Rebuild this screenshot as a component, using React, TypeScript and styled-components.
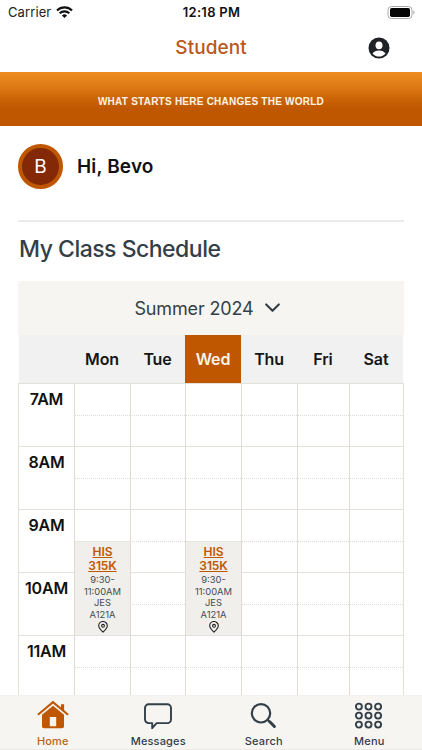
import React from "react";
import styled, { createGlobalStyle, css } from "styled-components";

const GlobalStyle = createGlobalStyle`
  *, *::before, *::after { box-sizing: border-box; }
  html, body { margin: 0; padding: 0; background: #fff; overflow: hidden; }
  body { font-family: Inter, "Liberation Sans", sans-serif; color: #111; }
`;

const Screen = styled.div`
  width: 422px;
  height: 750px;
  display: flex;
  flex-direction: column;
  overflow: hidden;
  background: #fff;
`;

const StatusBar = styled.div`
  flex: none;
  height: 24px;
  padding: 0 7px 0 8px;
  display: grid;
  grid-template-columns: 1fr auto 1fr;
  align-items: center;
`;

const Carrier = styled.div`
  display: flex;
  align-items: center;
  gap: 5px;
  font-size: 13px;
  line-height: 24px;
  letter-spacing: 0.1px;
  color: #222;
`;

const Clock = styled.div`
  font-size: 13px;
  line-height: 24px;
  font-weight: 600;
  letter-spacing: 0.3px;
  color: #111;
`;

const BatterySlot = styled.div`
  display: flex;
  justify-content: flex-end;
`;

const TitleBar = styled.header`
  flex: none;
  height: 48px;
  padding: 0 32px;
  display: grid;
  grid-template-columns: 1fr auto 1fr;
  align-items: center;
`;

const Title = styled.h1`
  grid-column: 2;
  margin: 0;
  font-size: 19px;
  line-height: 24px;
  font-weight: 500;
  letter-spacing: 0.05px;
  color: #b9581b;
`;

const AccountButton = styled.button`
  justify-self: end;
  display: flex;
  padding: 0;
  border: 0;
  background: none;
`;

const Banner = styled.div`
  flex: none;
  height: 54px;
  display: flex;
  align-items: center;
  justify-content: center;
  padding-top: 4px;
  background: linear-gradient(#ee8d20 0%, #e07c15 25%, #c96405 50%, #bf5700 68%, #bf5700 100%);
  color: #fff3e4;
  font-family: "Liberation Sans", sans-serif;
  font-size: 10px;
  font-weight: 700;
  letter-spacing: 0.24px;
`;

const Content = styled.main`
  flex: 1;
  min-height: 0;
  overflow: hidden;
  padding: 0 18px;
`;

const Greeting = styled.section`
  height: 94px;
  display: flex;
  gap: 14px;
  padding-top: 18px;
`;

const Avatar = styled.div`
  width: 45px;
  height: 45px;
  border: 4px solid #bf5700;
  border-radius: 50%;
  background: #842908;
  color: #fff;
  font-size: 19px;
  line-height: 38px;
  text-align: center;
`;

const Hello = styled.div`
  font-size: 19px;
  line-height: 45px;
  font-weight: 600;
  letter-spacing: 0.15px;
`;

const SectionTitle = styled.h2`
  height: 61px;
  margin: 0;
  padding-left: 1px;
  border-top: 2px solid #ecebe9;
  font-size: 23px;
  line-height: 54px;
  font-weight: 500;
  letter-spacing: -0.5px;
  color: #333f48;
`;

const TermPicker = styled.div`
  height: 54px;
  display: flex;
  align-items: center;
  justify-content: center;
  gap: 11px;
  padding-right: 8px;
  background: #f7f5f1;
  color: #333f48;
  font-size: 18px;
  letter-spacing: -0.15px;
`;

const columns = css`
  display: grid;
  grid-template-columns: 56px 56px 55px 56px 56px 52px 54px;
`;

const DayHeader = styled.div`
  ${columns}
  height: 48px;
  margin-left: 1px;
  background: #f1f1f1;
  grid-template-columns: 55px 56px 55px 56px 56px 52px 54px;
  margin-right: 1px;
`;

const Day = styled.div<{ $today?: boolean }>`
  font-size: 16px;
  line-height: 48px;
  font-weight: 600;
  letter-spacing: -0.15px;
  text-align: center;
  color: ${(p) => (p.$today ? "#f8f3ed" : "#161616")};
  background: ${(p) => (p.$today ? "#bf5700" : "transparent")};
`;

const Schedule = styled.div`
  ${columns}
  width: 386px;
  grid-template-rows: repeat(5, 32px 31px);
  border-right: 1px solid #e3dfd9;
`;

const Hour = styled.div<{ $row: number }>`
  grid-column: 1;
  grid-row: ${(p) => p.$row} / span 2;
  border-top: 1px solid #e3dfd9;
  border-left: 1px solid #e3dfd9;
  font-size: 16px;
  line-height: 31px;
  font-weight: 600;
  letter-spacing: -0.2px;
  text-align: center;
`;

const Slot = styled.div<{ $row: number; $col: number }>`
  grid-column: ${(p) => p.$col};
  grid-row: ${(p) => p.$row};
  border-left: 1px solid #dfdbd4;
  border-top: 1px ${(p) => (p.$row % 2 ? "solid #e3dfd9" : "dotted #dedcd8")};
`;

const ClassBlock = styled.div<{ $col: number }>`
  grid-column: ${(p) => p.$col};
  grid-row: 6 / span 3;
  margin-left: 1px;
  padding-top: 3px;
  display: flex;
  flex-direction: column;
  align-items: center;
  background: #f0efec;
  border-top: 1px dotted #dedcd8;
  z-index: 1;
`;

const ClassLink = styled.a`
  width: 40px;
  font-size: 12px;
  line-height: 14px;
  font-weight: 600;
  text-align: center;
  text-decoration: underline;
  letter-spacing: -0.1px;
  color: #bf5700;
`;

const ClassInfo = styled.div`
  width: 42px;
  padding: 1px 0;
  font-size: 9.4px;
  line-height: 11.6px;
  text-align: center;
  color: #454c52;
  white-space: nowrap;
`;

const TabBar = styled.nav`
  flex: none;
  height: 55px;
  display: grid;
  grid-template-columns: repeat(4, 1fr);
  background: #f6f5f2;
  border-top: 1px solid #f1f0ed;
  border-bottom: 1px solid #ecebe8;
`;

const Tab = styled.a<{ $active?: boolean }>`
  display: flex;
  flex-direction: column;
  align-items: center;
  gap: 2px;
  padding-top: 4px;
  font-size: 11px;
  line-height: 14px;
  font-weight: 500;
  letter-spacing: 0.15px;
  color: ${(p) => (p.$active ? "#bf5f18" : "#333f48")};
`;

const WifiIcon = () => (
  <svg width="17" height="12" viewBox="0 0 17 12" fill="none" stroke="#111" strokeWidth="2.2">
    <path d="M1 4.5a10.7 10.7 0 0 1 15 0" />
    <path d="M3.7 7.3a6.8 6.8 0 0 1 9.6 0" />
    <path d="M8.5 12 5.9 9.4a3.8 3.8 0 0 1 5.2 0z" fill="#111" stroke="none" />
  </svg>
);

const BatteryIcon = () => (
  <svg width="28" height="13" viewBox="0 0 28 13">
    <rect x="1" y="0.5" width="24" height="12" rx="3.4" fill="none" stroke="#aaa" />
    <rect x="3" y="2" width="20" height="9" rx="1.8" fill="#050505" />
    <path d="M26.3 4.5c1.7.5 1.7 3.5 0 4z" fill="#aaa" />
  </svg>
);

const AccountIcon = () => (
  <svg width="22" height="22" viewBox="0 0 22 22">
    <circle cx="11" cy="11" r="10.5" fill="#202124" />
    <ellipse cx="11" cy="8.3" rx="3.5" ry="3.9" fill="#fff" />
    <path d="M4.5 16.4c1.3-1.9 3.7-3 6.5-3s5.2 1.1 6.5 3c-1.5 2-3.9 3.2-6.5 3.2s-5-1.2-6.5-3.2z" fill="#fff" />
  </svg>
);

const ChevronIcon = () => (
  <svg width="15" height="10" viewBox="0 0 15 10" fill="none" stroke="#333f48" strokeWidth="2.1" strokeLinecap="round" strokeLinejoin="round">
    <path d="m1.2 1.4 6.3 6.4 6.3-6.4" />
  </svg>
);

const PinIcon = () => (
  <svg width="10" height="12" viewBox="0 0 10 12" fill="none" stroke="#222" strokeWidth="1.1">
    <path d="M5 11.2C2.2 8.6.7 6.8.7 4.8a4.3 4.3 0 0 1 8.6 0c0 2-1.5 3.8-4.3 6.4z" />
    <circle cx="5" cy="4.8" r="1.4" />
  </svg>
);

const HomeIcon = () => (
  <svg width="32" height="32" viewBox="0 0 32 32">
    <path d="m1.5 14.2 14.5-12 14.5 12" fill="none" stroke="#bf5700" strokeWidth="2.1" strokeLinecap="round" />
    <path d="M24 4.3h3.1v7.2L24 9z" fill="#bf5700" />
    <path d="M5 14.8 16 5.8l11 9v11.4q0 2-2 2H7q-2 0-2-2z" fill="#bf5700" />
    <path d="M12.8 17h6.4v9.2h-6.4z" fill="#f6f5f2" />
  </svg>
);

const MessageIcon = () => (
  <svg width="32" height="32" viewBox="0 0 32 32" fill="none" stroke="#333f48" strokeWidth="1.9" strokeLinejoin="round">
    <path d="M6.7 4.3h18.6A3.7 3.7 0 0 1 29 8v11.4a3.7 3.7 0 0 1-3.7 3.7H14.6l-4.4 5.1v-5.1H6.7A3.7 3.7 0 0 1 3 19.4V8a3.7 3.7 0 0 1 3.7-3.7z" />
  </svg>
);

const SearchIcon = () => (
  <svg width="32" height="32" viewBox="0 0 32 32" fill="none" stroke="#333f48" strokeLinecap="round">
    <circle cx="13" cy="13.3" r="9.2" strokeWidth="2.2" />
    <path d="m19.7 20 1.8 1.8" strokeWidth="2.2" />
    <path d="m21.8 21.8 4.6 4.7" strokeWidth="3" />
  </svg>
);

const MenuIcon = () => (
  <svg width="32" height="32" viewBox="0 0 32 32" fill="none" stroke="#333f48" strokeWidth="1.9">
    {[6.6, 15.6, 24.6].map((y) =>
      [5.9, 15.5, 25.1].map((x) => <circle key={`${x}-${y}`} cx={x} cy={y} r="3" />)
    )}
  </svg>
);

const days = ["Mon", "Tue", "Wed", "Thu", "Fri", "Sat"];
const hours = ["7AM", "8AM", "9AM", "10AM", "11AM"];
const classColumns = [2, 4];
const halfHours = Array.from({ length: hours.length * 2 }, (_, i) => i + 1);

const tabs = [
  { label: "Home", Icon: HomeIcon },
  { label: "Messages", Icon: MessageIcon },
  { label: "Search", Icon: SearchIcon },
  { label: "Menu", Icon: MenuIcon },
];

export default function App() {
  return (
    <Screen>
      <GlobalStyle />
      <StatusBar>
        <Carrier>
          Carrier
          <WifiIcon />
        </Carrier>
        <Clock>12:18 PM</Clock>
        <BatterySlot>
          <BatteryIcon />
        </BatterySlot>
      </StatusBar>
      <TitleBar>
        <Title>Student</Title>
        <AccountButton aria-label="Account">
          <AccountIcon />
        </AccountButton>
      </TitleBar>
      <Banner>WHAT STARTS HERE CHANGES THE WORLD</Banner>
      <Content>
        <Greeting>
          <Avatar>B</Avatar>
          <Hello>Hi, Bevo</Hello>
        </Greeting>
        <SectionTitle>My Class Schedule</SectionTitle>
        <TermPicker>
          Summer 2024
          <ChevronIcon />
        </TermPicker>
        <DayHeader>
          <span />
          {days.map((day) => (
            <Day key={day} $today={day === "Wed"}>
              {day}
            </Day>
          ))}
        </DayHeader>
        <Schedule>
          {hours.map((hour, i) => (
            <Hour key={hour} $row={i * 2 + 1}>
              {hour}
            </Hour>
          ))}
          {halfHours.map((row) =>
            days.map((day, i) => <Slot key={`${day}-${row}`} $row={row} $col={i + 2} />)
          )}
          {classColumns.map((col) => (
            <ClassBlock key={col} $col={col}>
              <ClassLink>HIS 315K</ClassLink>
              <ClassInfo>
                9:30-
                <br />
                11:00AM
                <br />
                JES
                <br />
                A121A
              </ClassInfo>
              <PinIcon />
            </ClassBlock>
          ))}
        </Schedule>
      </Content>
      <TabBar>
        {tabs.map(({ label, Icon }) => (
          <Tab key={label} $active={label === "Home"}>
            <Icon />
            {label}
          </Tab>
        ))}
      </TabBar>
    </Screen>
  );
}
